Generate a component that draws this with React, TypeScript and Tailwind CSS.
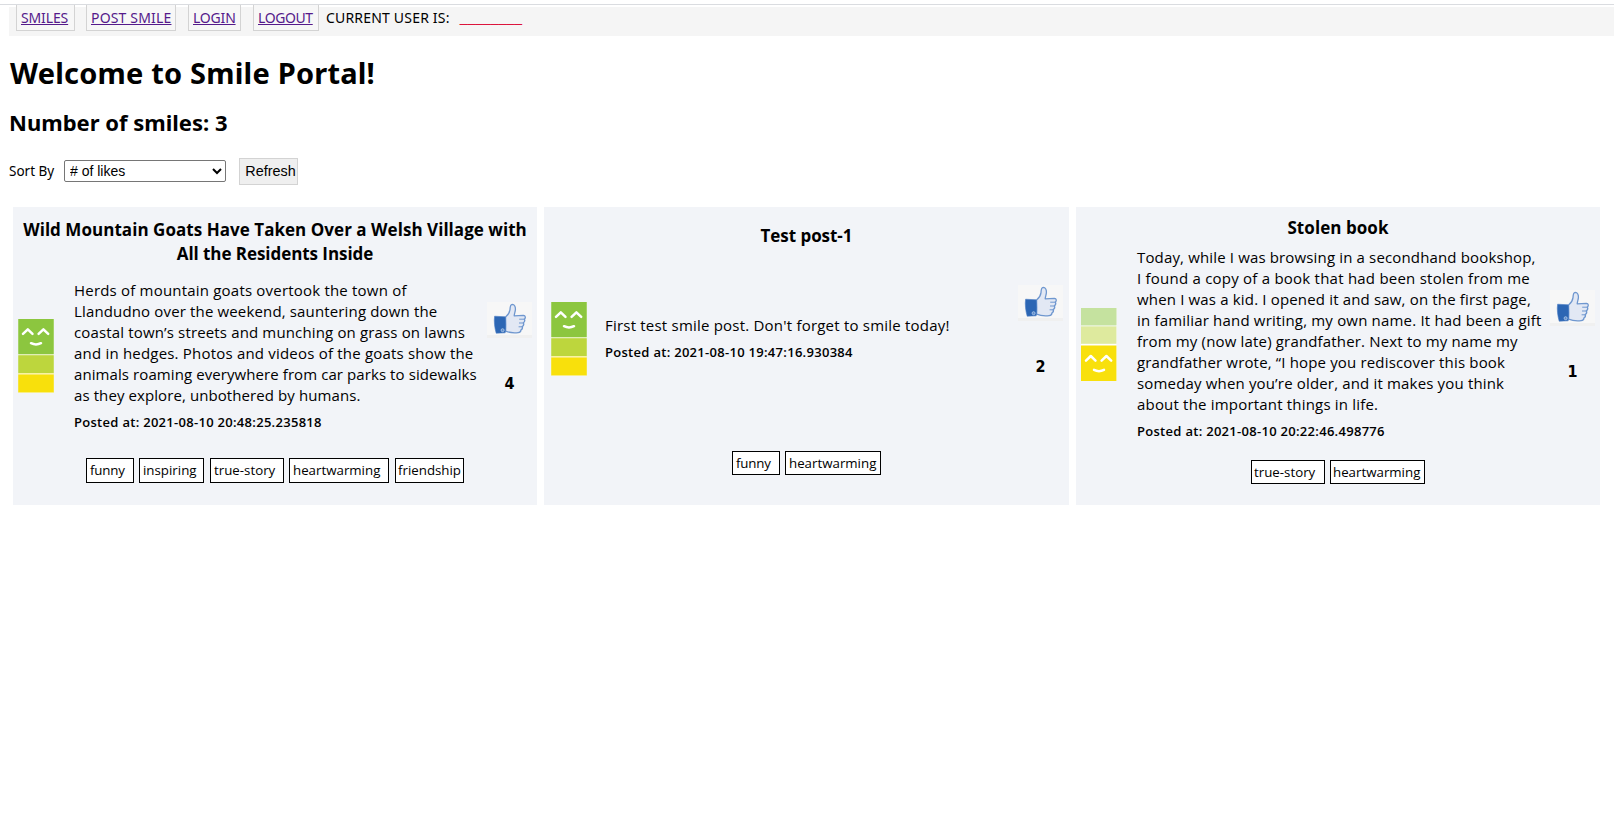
import React from "react";

type Line = { text: string; track: string };
type Tag = { label: string; box: string };
type Post = {
  title: Line[];
  titlePad: string;
  rowHeight: string;
  moodPad: string;
  bodyPad: string;
  likePad: string;
  body: Line[];
  postedAt: string;
  likes: number;
  mood: "top" | "bottom";
  tags: Tag[];
};

const posts: Post[] = [
  {
    title: [
      { text: "Wild Mountain Goats Have Taken Over a Welsh Village with", track: "tracking-[0.04px]" },
      { text: "All the Residents Inside", track: "tracking-[-0.06px]" },
    ],
    titlePad: "pt-[11px]",
    rowHeight: "h-[192px]",
    moodPad: "pt-[53px] pl-[5px]",
    bodyPad: "pt-3.5",
    likePad: "pt-9 mr-[5px]",
    body: [
      { text: "Herds of mountain goats overtook the town of", track: "tracking-[0.2px]" },
      { text: "Llandudno over the weekend, sauntering down the", track: "tracking-[0.15px]" },
      { text: "coastal town’s streets and munching on grass on lawns", track: "tracking-[0.15px]" },
      { text: "and in hedges. Photos and videos of the goats show the", track: "tracking-[0.2px]" },
      { text: "animals roaming everywhere from car parks to sidewalks", track: "tracking-[0.085px]" },
      { text: "as they explore, unbothered by humans.", track: "tracking-[0.09px]" },
    ],
    postedAt: "2021-08-10 20:48:25.235818",
    likes: 4,
    mood: "top",
    tags: [
      { label: "funny", box: "h-[25px] w-12 pl-[3px] tracking-[-0.2px]" },
      { label: "inspiring", box: "h-[25px] w-[65px] ml-[5px] pl-[3px]" },
      { label: "true-story", box: "h-[25px] w-[74px] ml-1.5 pl-[3px]" },
      { label: "heartwarming", box: "h-[25px] w-[100px] ml-[5px] pl-[3px]" },
      { label: "friendship", box: "h-[25px] w-[69px] ml-1.5 pl-0.5" },
    ],
  },
  {
    title: [{ text: "Test post-1", track: "tracking-[-0.05px]" }],
    titlePad: "pt-[17px]",
    rowHeight: "h-[203px]",
    moodPad: "pt-[54px] pl-[6.5px]",
    bodyPad: "pt-[67px]",
    likePad: "pt-[37px] mr-1.5",
    body: [{ text: "First test smile post. Don't forget to smile today!", track: "tracking-[0.21px]" }],
    postedAt: "2021-08-10 19:47:16.930384",
    likes: 2,
    mood: "top",
    tags: [
      { label: "funny", box: "h-6 w-12 pl-[3px] tracking-[-0.2px]" },
      { label: "heartwarming", box: "h-6 w-24 ml-[5px] pl-[3px]" },
    ],
  },
  {
    title: [{ text: "Stolen book", track: "tracking-[0.06px]" }],
    titlePad: "pt-[9px]",
    rowHeight: "h-[220px]",
    moodPad: "pt-[68px] pl-[5px]",
    bodyPad: "pt-[7px]",
    likePad: "pt-[50px] mr-[5px]",
    body: [
      { text: "Today, while I was browsing in a secondhand bookshop,", track: "tracking-[0.15px]" },
      { text: "I found a copy of a book that had been stolen from me", track: "tracking-[0.23px]" },
      { text: "when I was a kid. I opened it and saw, on the first page,", track: "tracking-[0.165px]" },
      { text: "in familiar hand writing, my own name. It had been a gift", track: "tracking-[0.185px]" },
      { text: "from my (now late) grandfather. Next to my name my", track: "tracking-[0.165px]" },
      { text: "grandfather wrote, “I hope you rediscover this book", track: "tracking-[0.165px]" },
      { text: "someday when you’re older, and it makes you think", track: "tracking-[0.165px]" },
      { text: "about the important things in life.", track: "tracking-[0.19px]" },
    ],
    postedAt: "2021-08-10 20:22:46.498776",
    likes: 1,
    mood: "bottom",
    tags: [
      { label: "true-story", box: "h-6 w-[74px] pl-0.5" },
      { label: "heartwarming", box: "h-6 w-[95px] ml-[5px] pl-0.5" },
    ],
  },
];

const links = [
  { label: "SMILES", box: "w-[59px] tracking-[-0.13px]" },
  { label: "POST SMILE", box: "w-[90px] ml-[11px] tracking-[0.17px]" },
  { label: "LOGIN", box: "w-[53px] ml-3 tracking-[-0.2px]" },
  { label: "LOGOUT", box: "w-[66px] ml-3 tracking-[-0.4px]" },
];

function Face({ y }: { y: number }) {
  return (
    <g transform={`translate(0 ${y})`} fill="none" stroke="#fff" strokeWidth="2.5" strokeLinecap="round" strokeLinejoin="round">
      <path d="M5 14.9 L9.8 10.3 L14.5 14.9" />
      <path d="M20.6 14.9 L25.4 10.3 L30.2 14.9" />
      <path d="M13 24.2 Q18 26.8 23 24.2" />
    </g>
  );
}

function Mood({ mood }: { mood: "top" | "bottom" }) {
  if (mood === "top") {
    return (
      <svg width="36" height="74" viewBox="0 0 36 74">
        <rect x="0.3" width="35.4" height="74" fill="#dfeeb6" />
        <rect x="0.3" width="35.4" height="35" fill="#8cc63f" />
        <rect x="0.3" y="36.3" width="35.4" height="17.7" fill="#bdd63d" />
        <rect x="0.3" y="54" width="35.4" height="20" fill="#f9f2a4" />
        <rect x="0.3" y="55.6" width="35.4" height="17.6" fill="#f8e00c" />
        <Face y={0} />
      </svg>
    );
  }
  return (
    <svg width="36" height="74" viewBox="0 0 36 74">
      <rect width="35.4" height="73" fill="#fff" />
      <rect width="35.4" height="18.4" fill="#e2f0cf" />
      <rect width="35.4" height="17" fill="#c5e29f" />
      <rect y="18.4" width="35.4" height="17.4" fill="#deea9e" />
      <rect y="37.5" width="35.4" height="35.5" fill="#f8e00c" />
      <Face y={37.7} />
    </svg>
  );
}

function ThumbUp() {
  return (
    <svg width="45" height="36" viewBox="0 0 45 36">
      <rect width="45" height="36" fill="#f7f7f7" />
      <rect y="33" width="45" height="3" fill="#f0f0f0" />
      <path
        d="M18.6 15 C20.6 13.4 22.6 10.8 23 7.6 C23.1 4.6 23.4 2.6 25.2 2.4 C27.6 2.4 28.6 5 28.4 7.6 C28.2 10 27.4 11.4 27.2 13.8 L36.4 13.4 C38.6 13.5 38.8 16 37.4 17 C38 18.4 37.6 20 36.4 20.8 C37 22.4 36.4 24 35.2 24.6 C35.8 26.2 35 27.4 34 27.8 C34 29.6 33 30.6 31.2 30.6 C27 31 22.6 30.8 18.6 29.2 Z"
        fill="#e2e8f4"
        stroke="#6f97cf"
        strokeWidth="1.3"
        strokeLinejoin="round"
      />
      <path d="M37 17.2 H32.6 M36.2 21 H32.4 M35 24.8 H32" stroke="#6f97cf" strokeWidth="1" strokeLinecap="round" fill="none" />
      <path d="M7.6 14.2 L18.2 14.8 C18.8 20 19 25.6 18.2 30.8 L9.2 31.2 C7.6 26 6.8 19 7.6 14.2 Z" fill="#2c66b4" stroke="#4a7cc2" strokeWidth="0.6" />
      <circle cx="15.6" cy="28.2" r="1.5" fill="#5c8bcb" stroke="#b5cbe9" strokeWidth="0.8" />
    </svg>
  );
}

function Card({ post }: { post: Post }) {
  return (
    <article className={`flex h-[298px] min-w-0 flex-col bg-[#f2f4f8] font-['Open_Sans',sans-serif] ${post.titlePad}`}>
      <h3 className="text-center text-[17px] leading-6 font-bold">
        {post.title.map((l) => (
          <span key={l.text} className={`block whitespace-nowrap ${l.track}`}>
            {l.text}
          </span>
        ))}
      </h3>
      <div className={`flex items-start ${post.rowHeight}`}>
        <div className={`w-[61px] shrink-0 ${post.moodPad}`}>
          <Mood mood={post.mood} />
        </div>
        <div className={`min-w-0 flex-1 ${post.bodyPad}`}>
          <p className="text-[15px] leading-[21px]">
            {post.body.map((l) => (
              <span key={l.text} className={`block whitespace-nowrap ${l.track}`}>
                {l.text}
              </span>
            ))}
          </p>
          <p className="mt-[7px] text-[13px] leading-[18px] font-semibold tracking-[0.29px]">Posted at: {post.postedAt}</p>
        </div>
        <div className={`flex w-[45px] shrink-0 flex-col items-center ${post.likePad}`}>
          <ThumbUp />
          <span className="mt-9 font-['DejaVu_Sans_Condensed','DejaVu_Sans',sans-serif] text-base leading-5 font-bold">
            {post.likes}
          </span>
        </div>
      </div>
      <ul className="flex justify-center">
        {post.tags.map((t) => (
          <li
            key={t.label}
            className={`border border-black bg-white text-[13.3px] leading-[22px] whitespace-nowrap ${t.box}`}
          >
            {t.label}
          </li>
        ))}
      </ul>
    </article>
  );
}

export default function App() {
  return (
    <div className="flex min-h-[829px] flex-col bg-white pt-1 font-['Noto_Sans',sans-serif] text-sm text-black">
      <div className="h-px bg-[#dadce0]" />
      <nav className="mt-0.5 ml-[9px] flex h-[29px] bg-[#f5f5f5] pl-[7px]">
        {links.map((l) => (
          <a
            key={l.label}
            className={`-mt-0.5 h-[26px] border-x border-b border-[#d3d3d3] bg-[#f7f7f7] pl-1 leading-[25px] whitespace-nowrap text-[#551a8b] underline decoration-1 ${l.box}`}
          >
            {l.label}
          </a>
        ))}
        <span className="ml-[7px] leading-[21px] tracking-[0.19px] whitespace-nowrap">CURRENT USER IS:</span>
        <span className="ml-2.5 font-['Liberation_Sans',Arial,sans-serif] leading-[21px] text-[crimson]">________</span>
      </nav>
      <header className="pl-[9px]">
        <h1 className="mt-[17px] pl-px text-[29px] leading-10 font-bold tracking-[0.2px]">Welcome to Smile Portal!</h1>
        <h2 className="mt-3.5 text-[22px] leading-[30px] font-bold">Number of smiles: 3</h2>
        <div className="mt-[21px] flex h-[27px] items-start">
          <label className="mt-[3px] w-[55px] text-[13.5px] leading-5">Sort By</label>
          <select className="mt-0.5 h-[22px] w-[162px] rounded-[2px] border border-[#767676] bg-white pl-px font-['Liberation_Sans',Arial,sans-serif] text-sm">
            <option># of likes</option>
          </select>
          <button className="ml-[13px] h-[27px] w-[59px] border border-[#d3d3d3] bg-[#efefef] pl-1 font-['Liberation_Sans',Arial,sans-serif] text-[14.4px] leading-[25px]">
            Refresh
          </button>
        </div>
      </header>
      <main className="mt-[22px] mr-[14px] ml-[13px] grid grid-cols-[524px_525px_524px] gap-[7px]">
        {posts.map((p) => (
          <Card key={p.postedAt} post={p} />
        ))}
      </main>
    </div>
  );
}
